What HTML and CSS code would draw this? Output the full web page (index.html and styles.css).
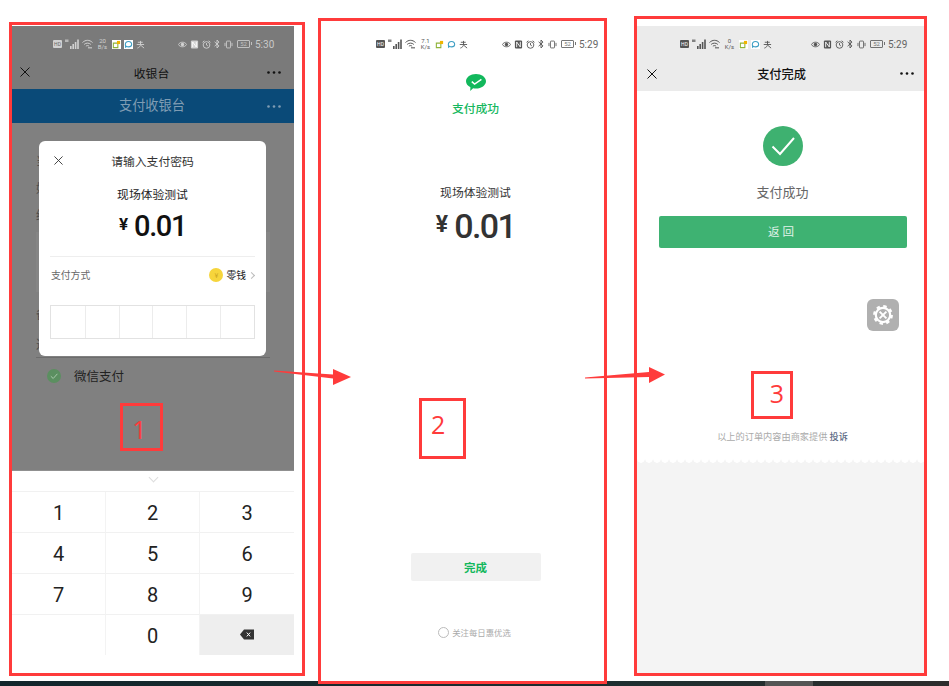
FILE: index.html
```html
<!DOCTYPE html>
<html lang="zh-CN">
<head>
    <meta charset="UTF-8">
    <meta name="viewport" content="width=device-width, initial-scale=1.0">
    <title>支付流程</title>
    <link rel="stylesheet" href="styles.css">
</head>
<body>
    <!-- shared status bar and nav icons -->
    <svg class="defs" width="0" height="0">
        <symbol id="i-signal" viewBox="0 0 14 10">
            <rect x="5" y="7" width="1.6" height="3" fill="currentColor"/>
            <rect x="7.4" y="5" width="1.6" height="5" fill="currentColor"/>
            <rect x="9.8" y="3" width="1.6" height="7" fill="currentColor"/>
            <rect x="12.2" y="0.5" width="1.6" height="9.5" fill="currentColor"/>
            <rect x="0" y="0.5" width="3.5" height="2.5" fill="currentColor" opacity="0.7"/>
        </symbol>
        <symbol id="i-wifi" viewBox="0 0 11 10">
            <path d="M0.5 3.5C3.5 0.6 7.5 0.6 10.5 3.5M2.2 5.4C4 3.7 7 3.7 8.8 5.4M3.9 7.2C4.8 6.4 6.2 6.4 7.1 7.2" fill="none" stroke="currentColor" stroke-width="1"/>
            <rect x="6" y="8" width="4" height="1.5" fill="currentColor" opacity="0.7"/>
        </symbol>
        <symbol id="i-app1" viewBox="0 0 10 10">
            <rect width="10" height="10" fill="#fff"/>
            <path d="M1.5 3.5H6.5V8.5H1.5Z" fill="none" stroke="#8fb33a" stroke-width="1.2"/>
            <rect x="5.5" y="1" width="3.5" height="3.5" fill="#f0b400"/>
        </symbol>
        <symbol id="i-app2" viewBox="0 0 10 10">
            <rect width="10" height="10" fill="#fff"/>
            <path d="M1.5 5C1.5 2.8 3 1.6 5 1.6S8.5 2.8 8.5 5 7 7.6 5 7.6C4.2 7.6 3.5 7.4 3 7L1.8 8Z" fill="none" stroke="#3f9fc4" stroke-width="1.2"/>
        </symbol>
        <symbol id="i-app3" viewBox="0 0 10 10">
            <path d="M2 2.5H7.5M0.8 5H9M5 1V5C5 7 3.5 8.3 1.5 9M5.5 6L9 9" fill="none" stroke="currentColor" stroke-width="1"/>
        </symbol>
        <symbol id="i-eye" viewBox="0 0 10 8">
            <path d="M0.4 4C2.6 0.6 7.4 0.6 9.6 4 7.4 7.4 2.6 7.4 0.4 4Z" fill="none" stroke="currentColor" stroke-width="1"/>
            <circle cx="5" cy="4" r="1.9" fill="currentColor"/>
        </symbol>
        <symbol id="i-nfc" viewBox="0 0 9 10">
            <rect x="0.5" y="0.5" width="8" height="9" rx="1.2" fill="currentColor"/>
            <path d="M2.5 8V2.2L6.5 7.8V2" fill="none" stroke="#fff" stroke-width="1"/>
        </symbol>
        <symbol id="i-alarm" viewBox="0 0 10 10">
            <circle cx="5" cy="5.5" r="3.7" fill="none" stroke="currentColor" stroke-width="1"/>
            <path d="M5 3.4V5.6L6.5 6.5M0.6 2.6L2.6 0.8M9.4 2.6L7.4 0.8" fill="none" stroke="currentColor" stroke-width="1"/>
        </symbol>
        <symbol id="i-bt" viewBox="0 0 6 10">
            <path d="M0.6 2.8L5 6.9 3 9V1L5 3.1 0.6 7.2" fill="none" stroke="currentColor" stroke-width="0.9"/>
        </symbol>
        <symbol id="i-vib" viewBox="0 0 11 10">
            <rect x="3" y="0.8" width="5" height="8.4" rx="0.8" fill="none" stroke="currentColor" stroke-width="1"/>
            <path d="M1.2 3V7M9.8 3V7" stroke="currentColor" stroke-width="1"/>
        </symbol>
        <symbol id="i-close" viewBox="0 0 10 10">
            <path d="M0.5 0.5L9.5 9.5M9.5 0.5L0.5 9.5" fill="none" stroke="currentColor" stroke-width="1"/>
        </symbol>
        <symbol id="i-dots" viewBox="0 0 14 3">
            <circle cx="1.5" cy="1.5" r="1.3" fill="currentColor"/>
            <circle cx="7" cy="1.5" r="1.3" fill="currentColor"/>
            <circle cx="12.5" cy="1.5" r="1.3" fill="currentColor"/>
        </symbol>
    </svg>

    <main class="sheet">
        <!-- step 1: password -->
        <section class="frame frame-one">
            <div class="screen screen-one">
                <div class="status status-dim">
                    <div class="status-group">
                        <span class="hd">HD</span>
                        <svg class="ic-signal"><use href="#i-signal"/></svg>
                        <svg class="ic-wifi"><use href="#i-wifi"/></svg>
                        <span class="speed">20<br>B/s</span>
                        <svg class="ic-app"><use href="#i-app1"/></svg>
                        <svg class="ic-app"><use href="#i-app2"/></svg>
                        <svg class="ic-app"><use href="#i-app3"/></svg>
                    </div>
                    <div class="status-group">
                        <svg class="ic-app"><use href="#i-eye"/></svg>
                        <svg class="ic-app"><use href="#i-nfc"/></svg>
                        <svg class="ic-app"><use href="#i-alarm"/></svg>
                        <svg class="ic-bt"><use href="#i-bt"/></svg>
                        <svg class="ic-app"><use href="#i-vib"/></svg>
                        <span class="battery">52</span>
                        <span class="time">5:30</span>
                    </div>
                </div>
                <div class="nav nav-dim">
                    <svg class="ic-close"><use href="#i-close"/></svg>
                    <span class="nav-title">收银台</span>
                    <svg class="ic-dots"><use href="#i-dots"/></svg>
                </div>
                <div class="band">
                    <span class="band-title">支付收银台</span>
                    <svg class="ic-dots band-dots"><use href="#i-dots"/></svg>
                </div>
                <div class="cashier">
                    <div class="dim-row">当前</div>
                    <div class="dim-row">好友</div>
                    <div class="dim-row">终端</div>
                    <div class="dim-block"></div>
                    <div class="dim-row dim-gap">备注</div>
                    <div class="dim-row dim-last">选择</div>
                    <div class="pay-row">
                        <span class="pay-check"><svg viewBox="0 0 14 14"><path d="M3.8 7.2L6.2 9.5 10.4 4.8" fill="none" stroke="#a8c8aa" stroke-width="1"/></svg></span>
                        微信支付
                    </div>
                    <div class="modal">
                        <div class="modal-head">
                            <svg class="ic-close modal-close"><use href="#i-close"/></svg>
                            <span>请输入支付密码</span>
                        </div>
                        <div class="modal-name">现场体验测试</div>
                        <div class="amount">
                            <span class="yen">¥</span><span class="sum">0.01</span>
                        </div>
                        <div class="method">
                            <span>支付方式</span>
                            <span class="method-right">
                                <span class="coin">¥</span>
                                <span class="method-name">零钱</span>
                                <span class="chev"></span>
                            </span>
                        </div>
                        <div class="pin">
                            <span></span><span></span><span></span><span></span><span></span><span></span>
                        </div>
                    </div>
                </div>
                <div class="keys">
                    <div class="keys-top"><span class="keys-chev"></span></div>
                    <div class="keys-grid">
                        <div class="key">1</div>
                        <div class="key">2</div>
                        <div class="key">3</div>
                        <div class="key">4</div>
                        <div class="key">5</div>
                        <div class="key">6</div>
                        <div class="key">7</div>
                        <div class="key">8</div>
                        <div class="key">9</div>
                        <div class="key"></div>
                        <div class="key">0</div>
                        <div class="key key-del">
                            <svg viewBox="0 0 14 11" width="14" height="11">
                                <path d="M4 0.5H14V10.5H4L0 5.5Z" fill="#333"/>
                                <path d="M6.8 3.6L10.2 7.4M10.2 3.6L6.8 7.4" fill="none" stroke="#fff" stroke-width="1"/>
                            </svg>
                        </div>
                    </div>
                </div>
            </div>
            <div class="tag tag-one">1</div>
        </section>

        <!-- step 2: wechat result -->
        <section class="frame frame-two">
            <div class="screen screen-two">
                <div class="status">
                    <div class="status-group">
                        <span class="hd">HD</span>
                        <svg class="ic-signal"><use href="#i-signal"/></svg>
                        <svg class="ic-wifi"><use href="#i-wifi"/></svg>
                        <span class="speed">7.1<br>K/s</span>
                        <svg class="ic-app"><use href="#i-app1"/></svg>
                        <svg class="ic-app"><use href="#i-app2"/></svg>
                        <svg class="ic-app"><use href="#i-app3"/></svg>
                    </div>
                    <div class="status-group">
                        <svg class="ic-app"><use href="#i-eye"/></svg>
                        <svg class="ic-app"><use href="#i-nfc"/></svg>
                        <svg class="ic-app"><use href="#i-alarm"/></svg>
                        <svg class="ic-bt"><use href="#i-bt"/></svg>
                        <svg class="ic-app"><use href="#i-vib"/></svg>
                        <span class="battery">52</span>
                        <span class="time">5:29</span>
                    </div>
                </div>
                <div class="wx-body">
                    <svg class="wx-mark" viewBox="0 0 20 17">
                        <path d="M10 0C15.5 0 20 3.2 20 7.3S15.5 14.6 10 14.6C9 14.6 8 14.5 7.1 14.2L4.2 17 4.4 13.2C1.7 11.9 0 9.8 0 7.3 0 3.2 4.5 0 10 0Z" fill="#12b85c"/>
                        <path d="M5.8 7.6L8.6 10 15.4 5.4" fill="none" stroke="#fff" stroke-width="1.5"/>
                    </svg>
                    <div class="wx-ok">支付成功</div>
                    <div class="wx-name">现场体验测试</div>
                    <div class="amount amount-big">
                        <span class="yen">¥</span><span class="sum">0.01</span>
                    </div>
                    <div class="wx-done">完成</div>
                    <div class="follow"><span class="radio"></span>关注每日惠优选</div>
                </div>
            </div>
            <div class="tag tag-two">2</div>
        </section>

        <!-- step 3: merchant page -->
        <section class="frame frame-three">
            <div class="screen screen-three">
                <div class="status status-grey">
                    <div class="status-group">
                        <span class="hd">HD</span>
                        <svg class="ic-signal"><use href="#i-signal"/></svg>
                        <svg class="ic-wifi"><use href="#i-wifi"/></svg>
                        <span class="speed">0<br>K/s</span>
                        <svg class="ic-app"><use href="#i-app1"/></svg>
                        <svg class="ic-app"><use href="#i-app2"/></svg>
                        <svg class="ic-app"><use href="#i-app3"/></svg>
                    </div>
                    <div class="status-group">
                        <svg class="ic-app"><use href="#i-eye"/></svg>
                        <svg class="ic-app"><use href="#i-nfc"/></svg>
                        <svg class="ic-app"><use href="#i-alarm"/></svg>
                        <svg class="ic-bt"><use href="#i-bt"/></svg>
                        <svg class="ic-app"><use href="#i-vib"/></svg>
                        <span class="battery">52</span>
                        <span class="time">5:29</span>
                    </div>
                </div>
                <div class="nav nav-grey">
                    <svg class="ic-close"><use href="#i-close"/></svg>
                    <span class="nav-title nav-bold">支付完成</span>
                    <svg class="ic-dots"><use href="#i-dots"/></svg>
                </div>
                <div class="done">
                    <svg class="done-check" viewBox="0 0 40 40">
                        <circle cx="20" cy="20" r="20" fill="#3eb170"/>
                        <path d="M9.5 20.5L17 28 31 12" fill="none" stroke="#fff" stroke-width="2"/>
                    </svg>
                    <div class="done-text">支付成功</div>
                    <div class="done-back">返回</div>
                    <div class="tool">
                        <svg viewBox="0 0 32 32" width="32" height="32">
                            <circle cx="16" cy="16" r="7.2" fill="none" stroke="#fff" stroke-width="2.2"/>
                            <circle cx="16" cy="16" r="8.7" fill="none" stroke="#fff" stroke-width="2.4" stroke-dasharray="3.4 3.43"/>
                            <path d="M12.6 12.6L19.4 19.4M19.4 12.6L12.6 19.4" fill="none" stroke="#fff" stroke-width="2"/>
                        </svg>
                    </div>
                    <div class="note">以上的订单内容由商家提供 <b>投诉</b></div>
                </div>
                <div class="tear"></div>
            </div>
            <div class="tag tag-three">3</div>
        </section>
    </main>

    <svg class="arrow arrow-one" viewBox="0 0 78 17" width="78" height="17">
        <path d="M0 1.5L0 2.5 59 9.5 59 16 77 8 59 0 59 5.5Z" fill="#ff3b3b"/>
    </svg>
    <svg class="arrow arrow-two" viewBox="0 0 81 17" width="81" height="17">
        <path d="M0 10.5L0 11.5 64 10 64 16 80 7.5 64 0 64 5Z" fill="#ff3b3b"/>
    </svg>

    <div class="strip"><span class="strip-thumb"></span></div>
</body>
</html>
```

FILE: styles.css
```css
html, body {
    margin: 0;
    padding: 0;
    background: #fff;
}

body {
    width: 949px;
    height: 686px;
    position: relative;
    overflow: hidden;
    font-family: "Noto Sans CJK SC", "Liberation Sans", sans-serif;
    color: #222;
}

.defs {
    position: absolute;
}

.sheet {
    display: flex;
    align-items: flex-start;
    padding-left: 9px;
    position: relative;
    z-index: 1;
}

/* red annotation frames */
.frame {
    border: 3px solid #ff3b3b;
    box-sizing: border-box;
    position: relative;
    background: #fff;
}

.frame-one {
    width: 296px;
    height: 654px;
    margin-top: 22px;
}

.frame-two {
    width: 289px;
    height: 666px;
    margin-top: 18px;
    margin-left: 13px;
}

.frame-three {
    width: 293px;
    height: 660px;
    margin-top: 16px;
    margin-left: 27px;
}

.screen {
    display: flex;
    flex-direction: column;
}

.screen-one {
    width: 282px;
    height: 629px;
    margin-top: 1px;
    background: #808080;
}

.screen-two {
    height: 655px;
    margin-top: 5px;
}

.screen-three {
    height: 647px;
    margin-top: 7px;
}

/* status bar */
.status {
    height: 32px;
    padding: 4px 6px 0 55px;
    box-sizing: border-box;
    display: flex;
    align-items: center;
    justify-content: space-between;
    color: #555;
    font-family: "Roboto", "Liberation Sans", sans-serif;
}

.status-dim {
    padding: 4px 20px 0 41px;
    background: #7a7a7a;
    color: #d2d2d2;
}

.status-grey {
    padding: 4px 17px 0 43px;
    background: #ebebeb;
}

.status-group {
    display: flex;
    align-items: center;
    gap: 3px;
}

.hd {
    width: 9px;
    height: 8px;
    background: currentColor;
    border-radius: 1px;
    font-size: 5px;
    line-height: 8px;
    text-align: center;
    overflow: hidden;
}

.hd::first-line {
    color: #fff;
}

.status-dim .hd::first-line {
    color: #666;
}

.ic-signal {
    width: 14px;
    height: 10px;
}

.ic-wifi {
    width: 11px;
    height: 10px;
    margin-right: 1px;
}

.speed {
    width: 11px;
    font-size: 6px;
    line-height: 6px;
    text-align: center;
    margin-right: 1px;
}

.ic-app {
    width: 9px;
    height: 9px;
}

.ic-bt {
    width: 6px;
    height: 10px;
    margin-right: 1px;
}

.battery {
    width: 13px;
    height: 8px;
    margin-left: 1px;
    border: 1px solid currentColor;
    border-radius: 1px;
    box-sizing: border-box;
    font-size: 6px;
    line-height: 6px;
    text-align: center;
    position: relative;
    opacity: 0.8;
}

.battery::after {
    content: "";
    position: absolute;
    right: -3px;
    top: 1px;
    width: 1px;
    height: 3px;
    background: currentColor;
}

.time {
    font-size: 10px;
    margin-left: 2px;
    width: 19px;
    opacity: 0.9;
}

/* nav bars */
.nav {
    display: flex;
    align-items: center;
    justify-content: space-between;
    box-sizing: border-box;
    color: #111;
}

.nav-dim {
    height: 31px;
    padding: 0 13px 3px 8px;
    background: #7a7a7a;
}

.nav-grey {
    height: 33px;
    padding: 0 10px 2px 10px;
    background: #ebebeb;
}

.nav-title {
    font-size: 11.8px;
    margin-left: 6px;
}

.nav-bold {
    font-size: 12.2px;
    font-weight: 500;
}

.ic-close {
    width: 10px;
    height: 10px;
}

.ic-dots {
    width: 14px;
    height: 3px;
}

.band {
    height: 34px;
    background: #0a4a78;
    display: flex;
    align-items: center;
    justify-content: space-between;
    padding: 0 13px 0 107px;
    color: #7f9cb3;
}

.band-title {
    font-size: 13.2px;
    margin-bottom: 4px;
}

/* dimmed cashier page */
.cashier {
    flex: 1;
    position: relative;
    padding: 24px 24px 0;
    background: #808080;
    font-size: 12px;
    color: #4e4e4e;
}

.dim-row {
    height: 27px;
    line-height: 27px;
}

.dim-block {
    height: 60px;
    margin: 4px 0 0 0;
    width: 234px;
    background: #858585;
}

.dim-gap {
    margin-top: 8px;
}

.dim-last {
    margin-top: 3px;
    height: 27px;
    border-bottom: 1px solid #6c6c6c;
    width: 234px;
    box-sizing: content-box;
}

.pay-row {
    display: flex;
    align-items: center;
    gap: 13px;
    margin: 1px 0 0 11px;
    height: 33px;
    font-size: 12.5px;
    color: #222;
}

.pay-check {
    width: 14px;
    height: 14px;
    border-radius: 50%;
    background: #5b8f60;
}

.pay-check svg {
    display: block;
}

.modal {
    position: absolute;
    top: 18px;
    left: 27px;
    width: 227px;
    height: 215px;
    box-sizing: border-box;
    padding: 0 11px;
    background: #fff;
    border-radius: 6px;
    color: #333;
    z-index: 2;
}

.modal-head {
    height: 38px;
    display: flex;
    align-items: center;
    justify-content: center;
    font-size: 11.8px;
    position: relative;
}

.modal-close {
    position: absolute;
    left: 4px;
    top: 15px;
    width: 9px;
    height: 9px;
    color: #333;
}

.modal-name {
    margin-top: 6px;
    font-size: 11.8px;
    line-height: 18px;
    text-align: center;
    color: #222;
}

.amount {
    display: flex;
    align-items: center;
    justify-content: center;
    margin-top: 5px;
    height: 36px;
    font-family: "Roboto", "Liberation Sans", sans-serif;
    color: #111;
}

.yen {
    font-size: 17px;
    font-weight: 700;
    margin-right: 6px;
    position: relative;
    top: -2px;
}

.sum {
    font-size: 29px;
    font-weight: 500;
    letter-spacing: -1.4px;
}

.method {
    margin-top: 12px;
    border-top: 1px solid #eee;
    height: 36px;
    display: flex;
    align-items: center;
    justify-content: space-between;
    font-size: 9.8px;
    color: #666;
    padding: 0 1px;
}

.method-right {
    display: flex;
    align-items: center;
}

.coin {
    width: 14px;
    height: 14px;
    border-radius: 50%;
    background: #f6d53c;
    color: #c9a320;
    font-size: 7px;
    line-height: 14px;
    text-align: center;
    margin-right: 3px;
}

.method-name {
    color: #222;
}

.chev {
    width: 4px;
    height: 4px;
    margin-left: 3px;
    border-top: 1px solid #bbb;
    border-right: 1px solid #bbb;
    transform: rotate(45deg);
}

.pin {
    display: grid;
    grid-template-columns: repeat(6, 1fr);
    height: 34px;
    margin-top: 12px;
    box-sizing: border-box;
    border: 1px solid #e2e2e2;
}

.pin span {
    border-left: 1px solid #ececec;
}

.pin span:first-child {
    border-left: 0;
}

/* number keypad */
.keys {
    background: #fff;
    border-top: 1px solid #909090;
    box-sizing: border-box;
    height: 185px;
}

.keys-top {
    height: 20px;
    display: flex;
    justify-content: center;
}

.keys-chev {
    width: 6px;
    height: 6px;
    margin-top: 3px;
    border-right: 1px solid #ddd;
    border-bottom: 1px solid #ddd;
    transform: rotate(45deg);
}

.keys-grid {
    display: grid;
    grid-template-columns: repeat(3, 94px);
    grid-template-rows: 41px 41px 41px 40px;
    border-top: 1px solid #f1f1f1;
    font-family: "Roboto", "Liberation Sans", sans-serif;
}

.key {
    display: flex;
    align-items: center;
    justify-content: center;
    padding-top: 1px;
    font-size: 20px;
    color: #222;
    box-sizing: border-box;
    border-right: 1px solid #f3f3f3;
    border-bottom: 1px solid #f1f1f1;
}

.key:nth-child(3n) {
    border-right: 0;
}

.key:nth-child(n+10) {
    border-bottom: 0;
}

.key-del {
    background: #eee;
    padding: 0 0 2px;
}

/* wechat result */
.wx-body {
    display: flex;
    flex-direction: column;
    align-items: center;
    padding-left: 26px;
}

.wx-mark {
    width: 20px;
    height: 17px;
    margin-top: 16px;
    display: block;
}

.wx-ok {
    margin-top: 8px;
    font-size: 11.8px;
    line-height: 18px;
    font-weight: 500;
    color: #16b860;
}

.wx-name {
    margin-top: 66px;
    font-size: 11.8px;
    line-height: 18px;
    color: #333;
}

.amount-big {
    margin-top: 4px;
    height: 42px;
    color: #333;
}

.amount-big .yen {
    font-size: 23px;
    margin-right: 6px;
}

.amount-big .sum {
    font-size: 34px;
    letter-spacing: -1.6px;
}

.wx-done {
    margin-top: 306px;
    width: 130px;
    height: 28px;
    line-height: 28px;
    text-align: center;
    background: #f1f1f1;
    border-radius: 2px;
    color: #13b85d;
    font-size: 11.5px;
    font-weight: 700;
}

.follow {
    margin-top: 44px;
    margin-right: 2px;
    display: flex;
    align-items: center;
    gap: 3px;
    font-size: 8.4px;
    line-height: 14px;
    color: #aaa;
}

.radio {
    width: 11px;
    height: 11px;
    box-sizing: border-box;
    border: 1px solid #bbb;
    border-radius: 50%;
}

/* merchant page */
.done {
    height: 368px;
    display: flex;
    flex-direction: column;
    align-items: center;
    position: relative;
    padding-left: 4px;
}

.done-check {
    width: 40px;
    height: 40px;
    margin-top: 35px;
    display: block;
}

.done-text {
    margin-top: 16px;
    font-size: 13px;
    line-height: 20px;
    color: #666;
}

.done-back {
    margin-top: 14px;
    width: 248px;
    height: 32px;
    line-height: 30px;
    text-align: center;
    background: #3eb272;
    border-radius: 2px;
    color: #e2f3ea;
    font-size: 11.5px;
    letter-spacing: 3px;
}

.tool {
    position: absolute;
    top: 208px;
    right: 25px;
    width: 32px;
    height: 32px;
    background: #b0b0b0;
    border-radius: 6px;
}

.tool svg {
    display: block;
}

.note {
    margin-top: 181px;
    font-size: 9.2px;
    line-height: 14px;
    color: #aaa;
}

.note b {
    font-weight: 500;
    color: #5d6b85;
}

.tear {
    flex: 1;
    background: radial-gradient(circle at 4px 0, #fff 3.5px, transparent 4px) repeat-x 0 0 / 8px 5px, #f4f4f4;
}

/* numbered annotation boxes */
.tag {
    position: absolute;
    box-sizing: border-box;
    border: 3px solid #ff3b3b;
    color: #ff3b3b;
    font-family: "Open Sans", "Liberation Sans", sans-serif;
    font-size: 25px;
    display: flex;
    align-items: center;
    justify-content: center;
}

.tag-one {
    left: 108px;
    top: 378px;
    width: 43px;
    height: 48px;
    padding: 3px 4px 0 0;
}

.tag-two {
    left: 98px;
    top: 377px;
    width: 47px;
    height: 61px;
    justify-content: flex-start;
    padding: 0 0 9px 9px;
}

.tag-three {
    left: 114px;
    top: 352px;
    width: 42px;
    height: 48px;
    justify-content: flex-end;
    padding: 0 6px 4px 0;
}

/* arrows between steps */
.arrow {
    position: absolute;
    z-index: 2;
}

.arrow-one {
    left: 274px;
    top: 369px;
}

.arrow-two {
    left: 585px;
    top: 367px;
}

/* edge of the desktop below the capture */
.strip {
    position: absolute;
    left: 0;
    right: 0;
    bottom: 0;
    height: 5px;
    background: linear-gradient(90deg, #12252b, #1c2e30 60%, #2d2d2d);
}

.strip-thumb {
    position: absolute;
    left: 765px;
    width: 48px;
    top: 0;
    bottom: 0;
    background: #555;
}
```
